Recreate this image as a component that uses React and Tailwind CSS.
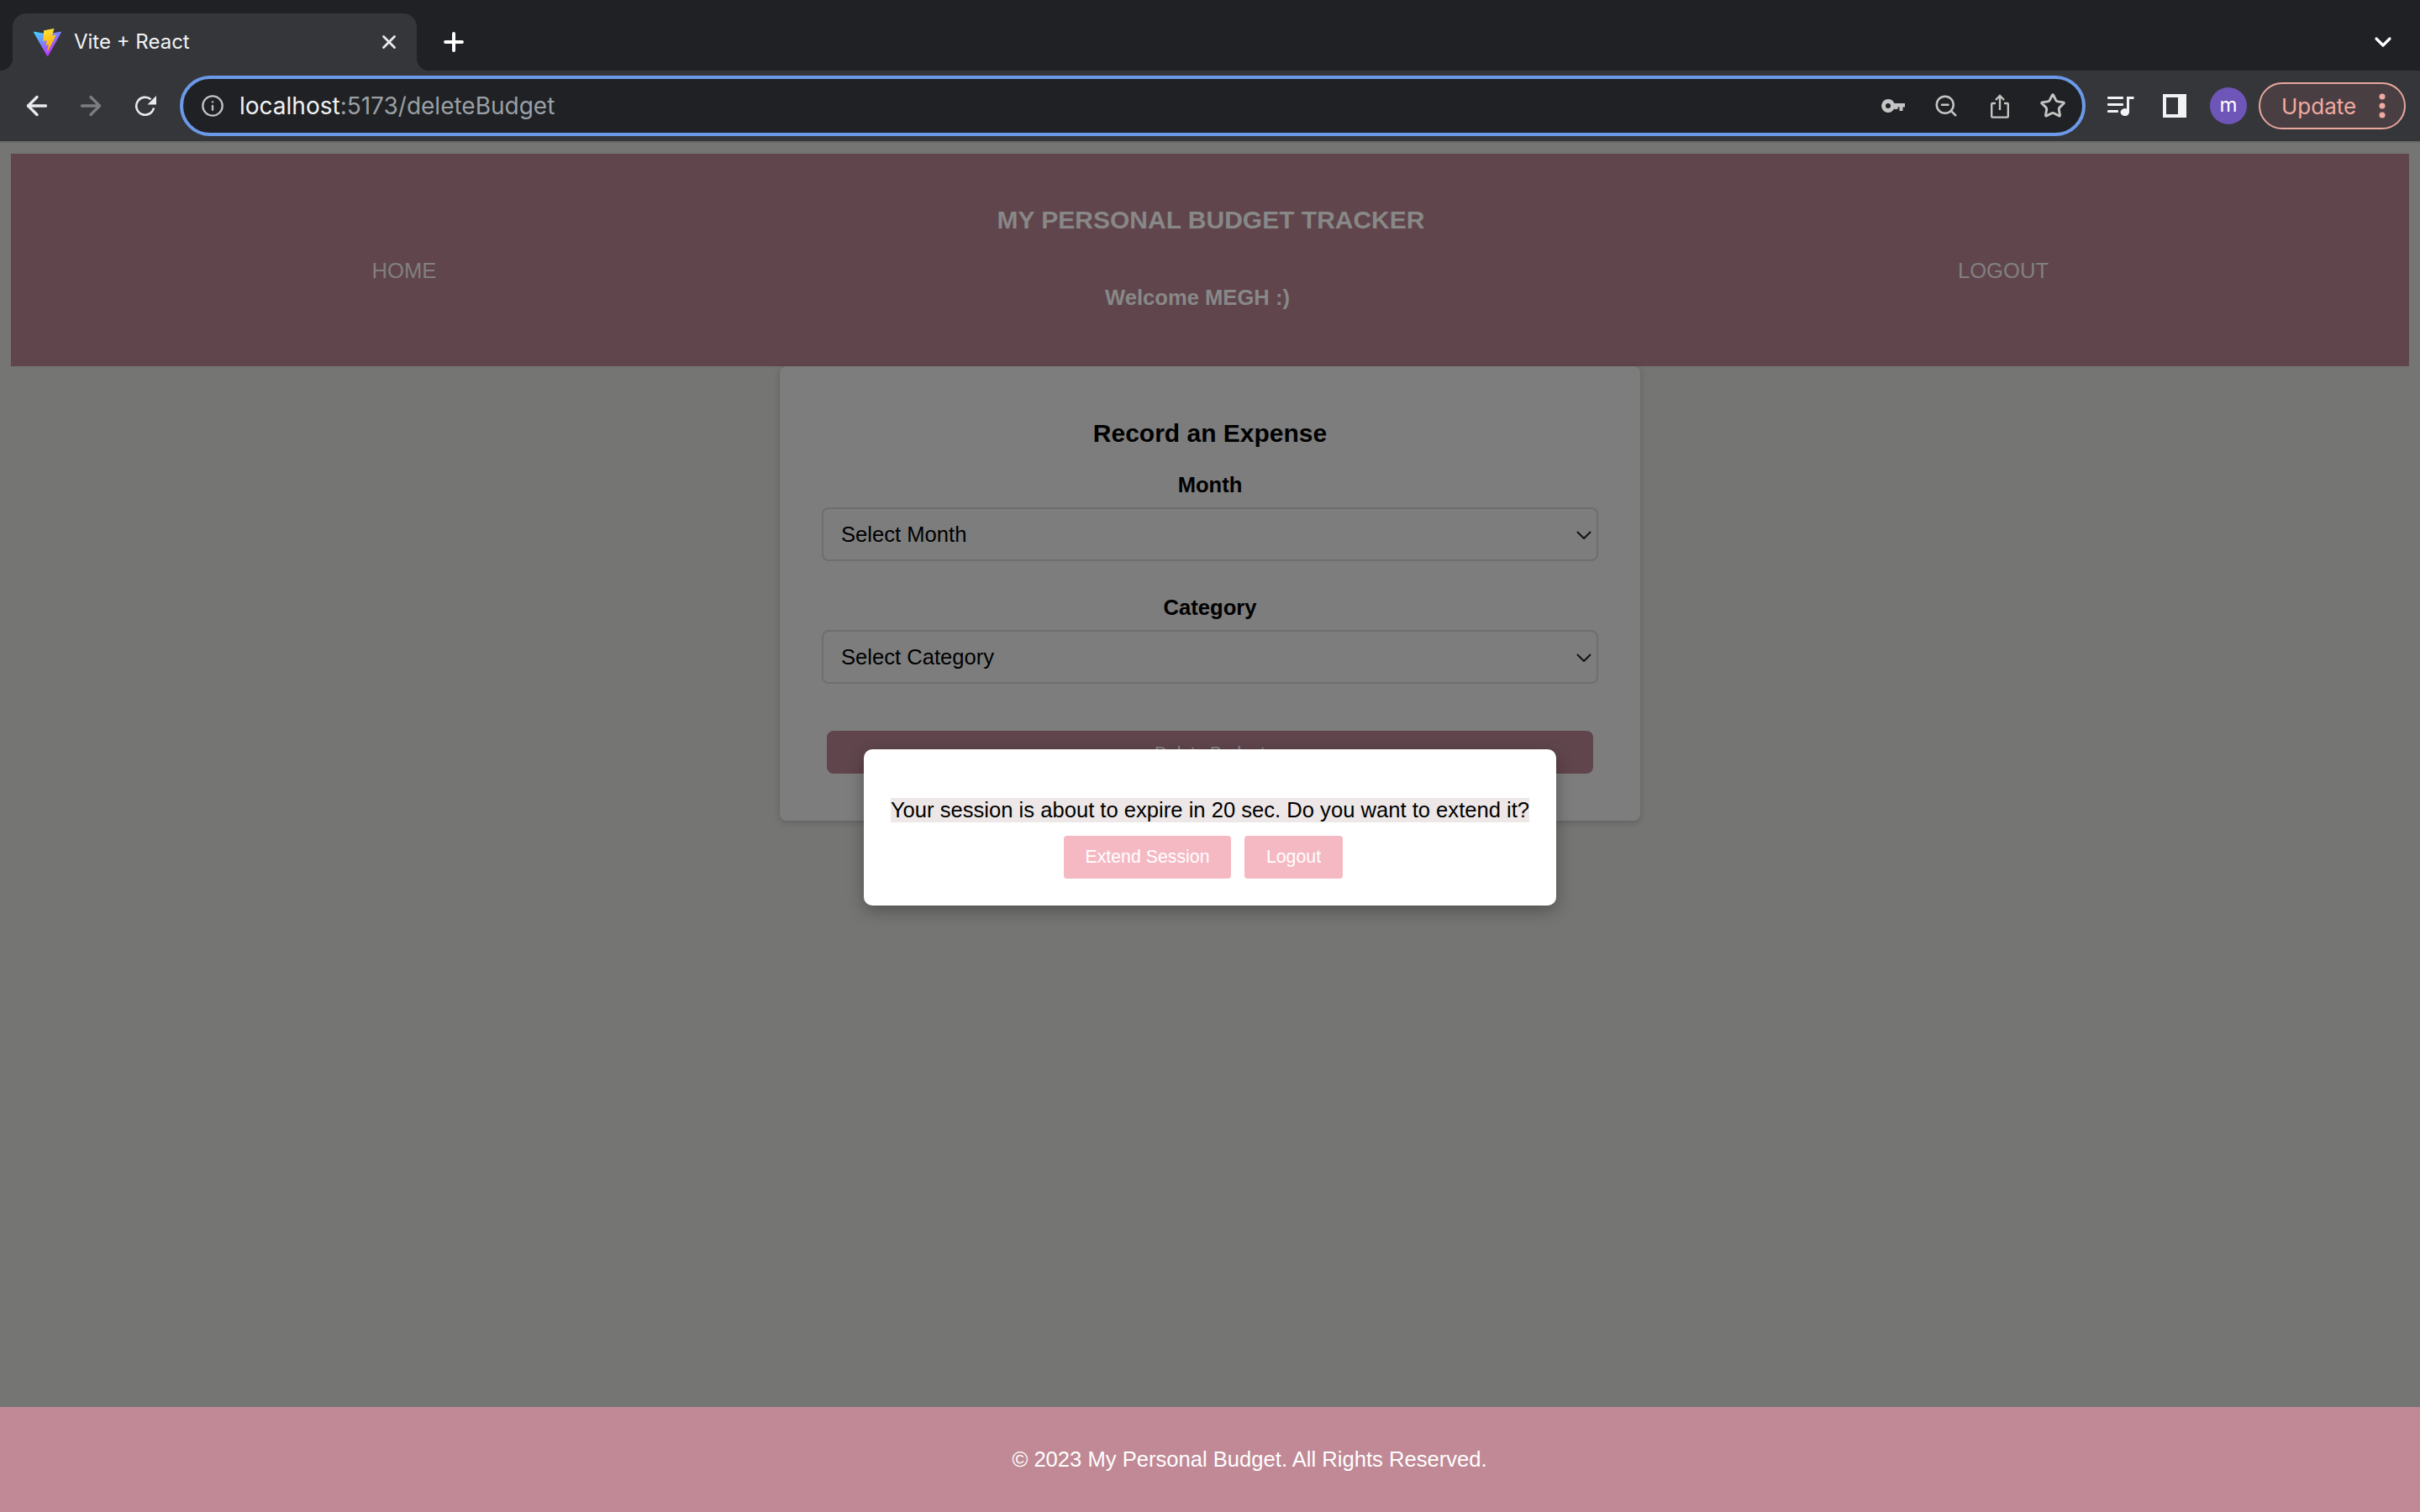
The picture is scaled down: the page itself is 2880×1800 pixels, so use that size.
import { ArrowLeft, ArrowRight, Info, ZoomOut, Star, X, Plus, ChevronDown } from "lucide-react";

const sans = "font-['Liberation_Sans',Arial,sans-serif]";

function ViteLogo() {
  return (
    <svg viewBox="0 0 256 257" className="h-[33px] w-[33px]">
      <defs>
        <linearGradient id="viteA" x1="0" y1="0.1" x2="0.6" y2="0.9">
          <stop offset="0" stopColor="#41d1ff" />
          <stop offset="1" stopColor="#bd34fe" />
        </linearGradient>
        <linearGradient id="viteB" x1="0.4" y1="0" x2="0.55" y2="0.9">
          <stop offset="0" stopColor="#ffea83" />
          <stop offset="0.08" stopColor="#ffdd35" />
          <stop offset="1" stopColor="#ffa800" />
        </linearGradient>
      </defs>
      <path fill="url(#viteA)" d="M255.153 37.938 134.897 252.976c-2.483 4.44-8.862 4.466-11.382.048L.875 37.958c-2.746-4.814 1.371-10.646 6.827-9.67l120.385 21.517a6.537 6.537 0 0 0 2.322-.004l117.867-21.483c5.438-.991 9.574 4.796 6.877 9.62Z" />
      <path fill="url(#viteB)" d="M185.432.063 96.44 17.501a3.268 3.268 0 0 0-2.634 3.014l-5.474 92.456a3.268 3.268 0 0 0 3.997 3.378l24.777-5.718c2.318-.535 4.413 1.507 3.936 3.838l-7.361 36.047c-.495 2.426 1.782 4.5 4.151 3.78l15.304-4.649c2.372-.72 4.652 1.36 4.15 3.788l-11.698 56.621c-.732 3.542 3.979 5.473 5.943 2.437l1.313-2.028 72.516-144.72c1.215-2.423-.88-5.186-3.54-4.672l-25.505 4.922c-2.396.462-4.435-1.77-3.759-4.114l16.646-57.705c.677-2.35-1.37-4.583-3.769-4.113Z" />
    </svg>
  );
}

function ReloadIcon() {
  return (
    <svg viewBox="0 0 28 26" className="ml-[34px] h-[26px] w-[28px]">
      <path d="M23 15.5A10.5 10.5 0 1 1 19.5 5.2" fill="none" stroke="#e8eaed" strokeWidth="2.6" />
      <path d="M26 1v10.5H15.5Z" fill="#e8eaed" />
    </svg>
  );
}

function KeyIcon() {
  return (
    <svg viewBox="0 0 28 16" className="h-[16px] w-[28px]" fill="#c4c4c4">
      <path fillRule="evenodd" d="M8 0a8 8 0 0 1 7.4 5H28v4.5h-2.5V14h-4V9.5h-2V12h-4V11A8 8 0 1 1 8 0Zm0 5a3 3 0 1 0 0 6 3 3 0 0 0 0-6Z" />
    </svg>
  );
}

function ShareIcon() {
  return (
    <svg viewBox="0 0 22 29" className="h-[29px] w-[22px]" fill="none" stroke="#c4c4c4" strokeWidth="2.4">
      <path d="M6 11H2.2a1 1 0 0 0-1 1v14.6a1 1 0 0 0 1 1h17.6a1 1 0 0 0 1-1V12a1 1 0 0 0-1-1H16" />
      <path d="M11 19V2M6 7l5-5 5 5" />
    </svg>
  );
}

function MediaIcon() {
  return (
    <svg viewBox="0 0 32 24" className="h-[24px] w-[32px]" fill="#f1f3f4">
      <rect x="0" y="1" width="19" height="3" rx="1" />
      <rect x="0" y="9" width="19" height="3" rx="1" />
      <rect x="0" y="17" width="13" height="3" rx="1" />
      <path d="M23 1h8.5v3H26v15.5a5.2 4.5 0 1 1-3-4Z" />
    </svg>
  );
}

function Tab() {
  return (
    <div className="relative ml-[15px] flex h-[68px] w-[481px] items-center rounded-t-[16px] bg-[#35363a] pl-[25px] pr-[20px]">
      <span className="absolute -left-[15px] bottom-0 h-[15px] w-[15px] bg-[radial-gradient(circle_at_0_0,transparent_15px,#35363a_15.5px)]" />
      <span className="absolute -right-[15px] bottom-0 h-[15px] w-[15px] bg-[radial-gradient(circle_at_100%_0,transparent_15px,#35363a_15.5px)]" />
      <ViteLogo />
      <span className="ml-[15px] flex-1 font-['Inter',sans-serif] text-[24px] text-[#f1f3f4]">Vite + React</span>
      <X size={26} strokeWidth={2.6} className="text-[#e8eaed]" />
    </div>
  );
}

function BrowserChrome() {
  return (
    <div className="shrink-0">
      <div className="flex h-[84px] items-end bg-[#202124]">
        <Tab />
        <Plus size={34} strokeWidth={2.8} className="mb-[17px] ml-[27px] text-white" />
        <ChevronDown size={32} strokeWidth={2.4} className="mb-[18px] ml-auto mr-[28px] text-white" />
      </div>
      <div className="flex h-[86px] items-center border-b-2 border-[#68686a] bg-[#35363a]">
        <ArrowLeft size={36} strokeWidth={2.2} className="ml-[26px] text-[#e8eaed]" />
        <ArrowRight size={36} strokeWidth={2.2} className="ml-[28px] text-[#7c7d80]" />
        <ReloadIcon />
        <div className="ml-[26px] flex h-[72px] w-[2268px] items-center rounded-full border-4 border-[#6b9ae8] bg-[#202124] pl-[21px] pr-[19px]">
          <Info size={28} strokeWidth={2} className="text-[#bdc1c6]" />
          <span className="ml-[18px] flex-1 font-['Inter',sans-serif] text-[28px] text-[#9aa0a6]">
            <span className="text-[#f1f3f4]">localhost</span>:5173/deleteBudget
          </span>
          <div className="flex items-center gap-[36px] text-[#c4c4c4]">
            <KeyIcon />
            <ZoomOut size={30} strokeWidth={2} className="-translate-x-[2px]" />
            <ShareIcon />
            <Star size={32} strokeWidth={2.2} />
          </div>
        </div>
        <div className="ml-[26px]">
          <MediaIcon />
        </div>
        <div className="ml-[34px] h-[28px] w-[28px] border-[4px] border-r-[10px] border-[#f1f3f4]" />
        <div className="ml-[28px] flex h-[44px] w-[44px] items-center justify-center rounded-full bg-[#6e55b8] pb-[3px] font-['Inter',sans-serif] text-[24px] text-white">m</div>
        <div className="ml-[14px] flex h-[56px] w-[175px] items-center rounded-full border-2 border-[#e8a79f] bg-[#493f42] pl-[25px] font-['Inter',sans-serif] text-[26px] text-[#f0aaa2]">
          Update
          <svg viewBox="0 0 8 30" className="ml-[27px] h-[30px] w-[8px]" fill="#f0aaa2">
            <circle cx="4" cy="4" r="3.5" />
            <circle cx="4" cy="15" r="3.5" />
            <circle cx="4" cy="26" r="3.5" />
          </svg>
        </div>
      </div>
    </div>
  );
}

function Field({ label, placeholder, className }) {
  return (
    <div className={`flex flex-col items-center ${className}`}>
      <label className="mb-[12px] text-[25.6px] leading-[30px] font-bold text-black">{label}</label>
      <div className="relative w-full">
        <select className="h-[64px] w-full appearance-none rounded-[8px] border-2 border-[#6e6e6e] bg-transparent pl-[21px] text-[25.6px] text-black">
          <option>{placeholder}</option>
        </select>
        <svg viewBox="0 0 18 10" className="absolute right-[8px] top-[28px] h-[10px] w-[18px]" fill="none" stroke="#111" strokeWidth="2">
          <path d="M1 1l8 8 8-8" />
        </svg>
      </div>
    </div>
  );
}

function BudgetForm() {
  return (
    <div className="mx-auto flex h-[541px] w-[1024px] flex-col rounded-[8px] bg-[#7d7d7d] px-[50px] pt-[62px] shadow-[0_2px_8px_rgba(0,0,0,0.18)]">
      <h2 className="text-center text-[30px] leading-[36px] font-bold text-black">Record an Expense</h2>
      <Field label="Month" placeholder="Select Month" className="mt-[28px]" />
      <Field label="Category" placeholder="Select Category" className="mt-[40px]" />
      <button className="mx-[6px] mt-[56px] h-[51px] shrink-0 rounded-[8px] bg-[#60454c] text-[20.8px] text-[#8a8a8a]">Delete Budget</button>
    </div>
  );
}

function SessionModal() {
  return (
    <div className="absolute left-[1028px] top-[892px] flex h-[186px] w-[824px] flex-col items-center rounded-[10px] bg-white pt-[58px] shadow-[0_6px_20px_rgba(0,0,0,0.3)]">
      <p className="bg-[#ede7e7] text-[25.6px] leading-[29px] text-black">Your session is about to expire in 20 sec. Do you want to extend it?</p>
      <div className="mr-[16px] mt-[16px] flex gap-[16px]">
        <button className="h-[51px] w-[199px] rounded-[4px] bg-[#f5b9c3] text-[21.3px] text-white">Extend Session</button>
        <button className="h-[51px] w-[117px] rounded-[4px] bg-[#f5b9c3] text-[21.3px] text-white">Logout</button>
      </div>
    </div>
  );
}

export default function App() {
  return (
    <div className={`relative flex h-[1800px] w-[2880px] flex-col overflow-hidden bg-[#757573] ${sans}`}>
      <BrowserChrome />
      <main className="flex-1 px-[13px] pt-[13px]">
        <header className="flex h-[253px] items-center bg-[#60454c]">
          <a className="mt-[26px] w-[936px] text-center text-[25.6px] text-[#808080]">HOME</a>
          <div className="flex-1 pb-[8px] text-center font-bold text-[#888888]">
            <h1 className="pl-[32px] text-[30px] leading-[38px]">MY PERSONAL BUDGET TRACKER</h1>
            <p className="mt-[58px] text-[25.6px] leading-[30px]">Welcome MEGH :)</p>
          </div>
          <a className="mt-[26px] w-[966px] text-center text-[25.6px] text-[#808080]">LOGOUT</a>
        </header>
        <BudgetForm />
      </main>
      <footer className="flex h-[125px] shrink-0 items-center justify-center bg-[#c08995] pl-[94px] text-[25.6px] text-white">
        © 2023 My Personal Budget. All Rights Reserved.
      </footer>
      <SessionModal />
    </div>
  );
}
